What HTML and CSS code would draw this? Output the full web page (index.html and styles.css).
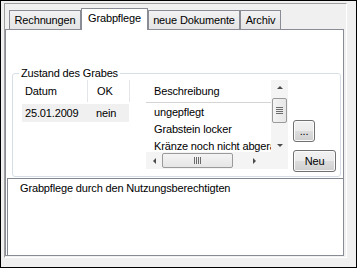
FILE: index.html
```html
<!DOCTYPE html>
<html>
<head>
    <link rel="stylesheet" href="styles.css">
</head>
<body>
    <div class="window">
        <div class="tabctl">
            <div class="tabs">
                <div class="tab t-rech">Rechnungen</div>
                <div class="tab active t-grab">Grabpflege</div>
                <div class="tab t-doku">neue Dokumente</div>
                <div class="tab t-arch">Archiv</div>
            </div>
            <div class="pane">
                <fieldset class="group">
                    <legend>Zustand des Grabes</legend>
                    <div class="group-body">
                        <div class="list dates">
                            <div class="head">
                                <div class="hcol c-datum">Datum</div>
                                <div class="hcol c-ok">OK</div>
                            </div>
                            <div class="row sel">
                                <span class="c-datum">25.01.2009</span>
                                <span class="c-ok">nein</span>
                            </div>
                        </div>

                        <div class="list desc">
                            <div class="desc-main">
                                <div class="head head-line">Beschreibung</div>
                                <div class="items">
                                    <div class="item">ungepflegt</div>
                                    <div class="item">Grabstein locker</div>
                                    <div class="item">Kränze noch nicht abgeräumt</div>
                                </div>
                            </div>
                            <div class="vscroll">
                                <span class="arrow up"></span>
                                <span class="vthumb"><span class="grip-h"></span></span>
                                <span class="arrow down"></span>
                            </div>
                            <div class="hscroll">
                                <span class="arrow left"></span>
                                <span class="hthumb"><span class="grip-v"></span></span>
                                <span class="arrow right"></span>
                            </div>
                            <div class="corner"></div>
                        </div>

                        <div class="buttons">
                            <button class="btn btn-more">...</button>
                            <button class="btn btn-neu">Neu</button>
                        </div>
                    </div>
                </fieldset>
                <div class="memo">Grabpflege durch den Nutzungsberechtigten</div>
            </div>
        </div>
    </div>
</body>
</html>
```

FILE: styles.css
```css
* {
    box-sizing: border-box;
}
body {
    margin: 0;
    font-family: "Liberation Sans", Arial, sans-serif;
    font-size: 11px;
    letter-spacing: -0.15px;
    color: #000;
}
.window {
    width: 357px;
    height: 268px;
    border: 1px solid #000;
    background: #f0f0f0;
    padding: 2px 9px 9px 3px;
}
.tabctl {
    height: 100%;
    display: flex;
    flex-direction: column;
    border-top: 1px solid #a0a0a0;
    border-left: 1px solid #a0a0a0;
    border-right: 1px solid #fff;
    border-bottom: 1px solid #fff;
}

/* tab strip */
.tabs {
    height: 25px;
    flex-shrink: 0;
    display: flex;
    align-items: flex-end;
    padding-left: 4px;
}
.tab {
    height: 19px;
    border: 1px solid #898c95;
    border-bottom: none;
    background: linear-gradient(#f2f2f2, #e4e4e4);
    text-align: center;
    line-height: 18px;
}
.tab.active {
    height: 22px;
    margin-bottom: -1px;
    background: #fff;
    line-height: 18px;
    position: relative;
    z-index: 1;
}
.t-rech { width: 72px; }
.t-grab { width: 67px; }
.t-doku { width: 92px; }
.t-arch { width: 41px; }

.pane {
    flex: 1;
    display: flex;
    flex-direction: column;
    margin: 0 2px 1px 0;
    border: 1px solid #898c95;
    background: #fff;
}

/* group box */
.group {
    margin: 36px 2px 0 6px;
    height: 111px;
    padding: 0;
    border: 1px solid #d5dfe5;
    border-radius: 3px;
}
.group legend {
    margin-left: 6px;
    padding: 0 2px;
    line-height: 14px;
}
.group-body {
    display: flex;
    align-items: flex-start;
    padding-left: 8px;
}

/* list views */
.list {
    height: 89px;
}
.dates {
    width: 123px;
}
.head {
    height: 22px;
    display: flex;
    align-items: center;
}
.hcol {
    height: 100%;
    line-height: 22px;
    border-right: 1px solid #e3e5e8;
}
.hcol.c-datum {
    width: 67px;
    padding-left: 4px;
}
.hcol.c-ok {
    width: 42px;
    padding-left: 9px;
}
.row {
    display: flex;
    height: 18px;
    line-height: 18px;
    margin: 2px 0 0 1px;
    width: 107px;
}
.row.sel {
    background: #f0f0f0;
}
.row .c-datum {
    width: 66px;
    padding-left: 3px;
}
.row .c-ok {
    padding-left: 8px;
}

.desc {
    width: 142px;
    margin-left: 2px;
    display: grid;
    grid-template-columns: 125px 17px;
    grid-template-rows: 72px 17px;
}
.desc-main {
    overflow: hidden;
}
.head-line {
    height: 23px;
    padding-left: 8px;
    border-bottom: 1px solid #d5d5d5;
}
.items {
    padding-top: 1px;
}
.item {
    height: 17px;
    line-height: 17px;
    padding-left: 8px;
    white-space: nowrap;
}

/* scroll bars */
.vscroll, .hscroll, .corner {
    background: #f4f4f4;
}
.vscroll {
    display: flex;
    flex-direction: column;
    align-items: center;
}
.hscroll {
    display: flex;
    align-items: center;
}
.arrow {
    width: 0;
    height: 0;
    border: 3px solid transparent;
}
.arrow.up {
    margin: 6px 0 5px;
    border-bottom: 3px solid #4a4a4a;
    border-top-width: 0;
}
.arrow.down {
    margin-top: auto;
    margin-bottom: 5px;
    border-top: 3px solid #4a4a4a;
    border-bottom-width: 0;
}
.arrow.left {
    margin: 0 6px 0 7px;
    border-right: 3px solid #4a4a4a;
    border-left-width: 0;
}
.arrow.right {
    margin-left: auto;
    margin-right: 15px;
    border-left: 3px solid #4a4a4a;
    border-right-width: 0;
}
.vthumb {
    width: 15px;
    height: 25px;
    margin-top: 4px;
    border: 1px solid #9a9a9a;
    border-radius: 2px;
    background: linear-gradient(to right, #f4f4f4, #e6e6e6);
    display: flex;
    align-items: center;
    justify-content: center;
}
.grip-h {
    width: 7px;
    height: 7px;
    background: repeating-linear-gradient(#6b6b6b 0 1px, transparent 1px 2px);
}
.hthumb {
    width: 71px;
    height: 15px;
    border: 1px solid #9a9a9a;
    border-radius: 2px;
    background: linear-gradient(#f4f4f4, #e6e6e6);
    display: flex;
    align-items: center;
    justify-content: center;
}
.grip-v {
    width: 7px;
    height: 7px;
    background: repeating-linear-gradient(to right, #6b6b6b 0 1px, transparent 1px 2px);
}

/* buttons */
.buttons {
    margin: 40px 0 0 5px;
    display: flex;
    flex-direction: column;
    align-items: flex-start;
    gap: 8px;
}
.btn {
    height: 22px;
    padding: 0;
    font: inherit;
    letter-spacing: inherit;
    color: #000;
    border: 1px solid #707070;
    border-radius: 3px;
    background: linear-gradient(#f2f2f2 0, #ebebeb 50%, #dddddd 50%, #cfcfcf 100%);
    box-shadow: inset 0 0 0 1px #fbfbfb;
}
.btn-more {
    width: 22px;
}
.btn-neu {
    width: 43px;
}

/* memo */
.memo {
    flex: 1;
    margin: 1px 0 0 1px;
    border-top: 1px solid #828790;
    border-left: 1px solid #828790;
    padding: 3px 0 0 12px;
}
```
